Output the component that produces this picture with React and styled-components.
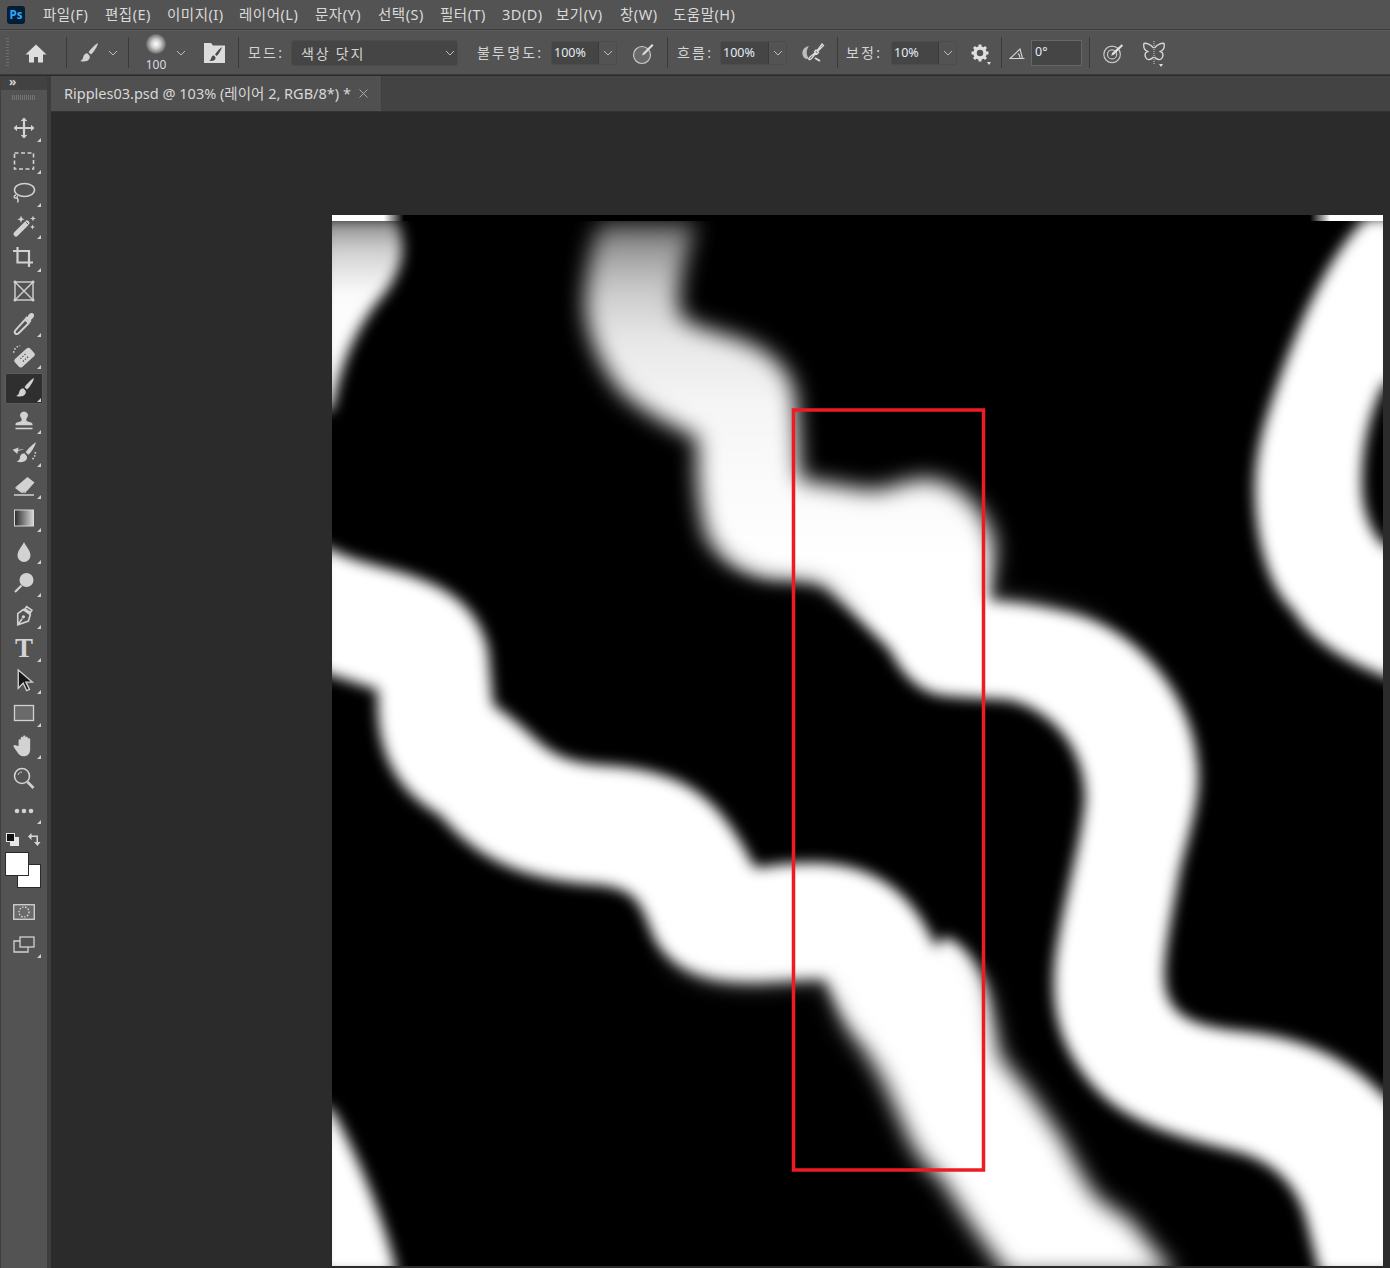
import React from 'react';
import styled, { createGlobalStyle } from 'styled-components';

const Global = createGlobalStyle`
  html, body { margin: 0; padding: 0; background: #2b2b2b; overflow: hidden; }
  #root { width: 1390px; height: 1268px; }
`;
const KR = `"Noto Sans", "Noto Sans CJK KR", sans-serif`;
const Page = styled.div`
  width: 1390px; height: 1268px; display: flex; flex-direction: column; overflow: hidden;
  font-family: ${KR}; color: #d6d6d6; background: #2b2b2b;
`;
const MenuBar = styled.div`
  height: 29px; flex: none; background: #535353; display: flex; align-items: center; padding-left: 7px;
  border-bottom: 1px solid #3c3c3c;
`;
const Logo = styled.div`
  width: 18px; height: 18px; border-radius: 3px; background: #001e36; color: #31a8ff; flex: none;
  font: 700 11.5px/18px "Open Sans", sans-serif; text-align: center; margin-right: 18px;
`;
const MenuItem = styled.span`
  font-size: 14.5px; line-height: 29px; color: #dadada; margin-right: 16px; white-space: nowrap;
  letter-spacing: 0.5px; width: ${p => p.$w}px;
`;
const OptionsBar = styled.div`
  height: 45px; flex: none; background: #535353; display: flex; align-items: center;
  border-top: 1px solid #5c5c5c; border-bottom: 1px solid #3a3a3a; box-sizing: border-box; margin-bottom: 1px;
`;
const Grip = styled.div`
  width: 3px; height: 30px; margin-left: 6px; flex: none;
  background: repeating-linear-gradient(to bottom, #6e6e6e 0 1px, transparent 1px 3px);
`;
const Sep = styled.div`
  width: 1px; height: 31px; background: #3a3a3a; flex: none; margin-left: ${p => p.$ml}px;
`;
const Slot = styled.div`
  width: ${p => p.$w}px; height: 30px; margin-left: ${p => p.$ml}px; flex: none; position: relative;
  display: flex; align-items: center; justify-content: center;
`;
const Label = styled.span`
  width: ${p => p.$w}px; margin-left: ${p => p.$ml}px; flex: none; font-size: 14px; color: #d4d4d4;
  white-space: nowrap; letter-spacing: 2.2px; margin-top: -2px;
`;
const Select = styled.div`
  width: ${p => p.$w}px; height: 26px; margin-left: ${p => p.$ml}px; flex: none; box-sizing: border-box;
  background: #454545; border: 1px solid #4c4c4c; border-radius: 3px; display: flex; align-items: center;
  justify-content: space-between; padding: 0 2px 0 9px; font-size: 14px; letter-spacing: 1.8px; color: #d4d4d4;
`;
const Combo = styled.div`
  width: ${p => p.$w}px; height: 24px; margin-left: ${p => p.$ml}px; flex: none; box-sizing: border-box; display: flex;
  border-radius: 3px; border: 1px solid #4c4c4c;
`;
const ComboValue = styled.div`
  flex: 1; background: #454545; font: 12.5px/22px "Noto Sans", sans-serif; color: #e4ecf4; padding-left: 2px;
`;
const ComboArrow = styled.div`
  width: 17px; border-left: 1px solid #3b3b3b; display: flex; align-items: center; justify-content: center;
`;
const AngleInput = styled.div`
  width: ${p => p.$w}px; height: 26px; margin-left: ${p => p.$ml}px; flex: none; box-sizing: border-box;
  background: #454545; border: 1px solid #666; font: 12.5px/22px "Noto Sans", sans-serif; color: #e4ecf4; padding-left: 3px;
`;
const PresetSize = styled.span`
  position: absolute; left: 0; right: 0; top: 20px; text-align: center; font: 12px/14px "Noto Sans", sans-serif; color: #d6dde4;
`;
const Dot = styled.span`
  position: absolute; right: ${p => p.$r || 0}px; bottom: ${p => p.$b || 0}px; width: 0; height: 0;
  border-left: 2.5px solid transparent; border-right: 2.5px solid transparent; border-top: 3px solid #e0e0e0;
`;
const Body = styled.div`
  flex: 1; display: flex; min-height: 0;
`;
const ToolPanel = styled.aside`
  width: 51px; flex: none; box-sizing: border-box; background: #535353; position: relative;
  border-left: 1px solid #3f3f3f; border-right: 4px solid #3d3d3d; display: flex; flex-direction: column;
`;
const Collapse = styled.div`
  height: 14px; flex: none; background: #424242; color: #d0d0d0; font: 700 12px/11px "Noto Sans", sans-serif;
  padding-left: 8px;
`;
const PanelGrip = styled.div`
  height: 22px; flex: none; display: flex; justify-content: center; padding-top: 5px; box-sizing: border-box;
`;
const PanelGripMark = styled.div`
  width: 24px; height: 5px; background: repeating-linear-gradient(to right, #747474 0 1px, transparent 1px 2px);
`;
const Tool = styled.div`
  height: 32.5px; flex: none; display: flex; align-items: center; justify-content: center; position: relative;
  &::before {
    content: ''; position: absolute; left: 4px; right: 4px; top: 1px; bottom: 1px; border-radius: 2px;
    background: ${p => p.$active ? '#2f2f2f' : 'transparent'};
    border: 1px solid ${p => p.$active ? '#5c5c5c' : 'transparent'};
  }
  & > * { position: relative; }
`;
const Corner = styled.span`
  position: absolute !important; right: 6px; bottom: 3px; width: 0; height: 0;
  border-left: 4px solid transparent; border-bottom: 4px solid #d0d0d0;
`;
const TGlyph = styled.span`
  font: 700 27px/24px "Liberation Serif", serif; color: #d4d4d4;
`;
const SwapRow = styled.div`
  display: flex; justify-content: space-between; align-items: center; margin: 5px 6px 0 5px; height: 14px; flex: none;
`;
const ColorStack = styled.div`
  width: 36px; height: 36px; margin: 6px 0 0 4px; position: relative; flex: none;
`;
const Swatch = styled.div`
  position: absolute; width: 24px; height: 24px; box-sizing: border-box; background: #fff; border: 1px solid #2b2b2b;
  left: ${p => p.$x}px; top: ${p => p.$y}px;
`;
const BottomTool = styled.div`
  height: 33px; flex: none; display: flex; align-items: center; justify-content: center; position: relative;
  margin-top: ${p => p.$mt || 0}px;
`;
const Main = styled.main`
  flex: 1; display: flex; flex-direction: column; min-width: 0;
`;
const TabBar = styled.div`
  height: 36px; flex: none; background: #434343; display: flex; box-sizing: border-box; border-bottom: 1px solid #333;
`;
const Tab = styled.div`
  width: 331px; box-sizing: border-box; background: #505050; display: flex; align-items: center; padding: 0 0 3px 13px;
  font-size: 14.5px; color: #d8d8d8; white-space: nowrap; gap: 8px; border-right: 1px solid #3f3f3f;
`;
const TabClose = styled.svg`
  margin-top: 3px; flex: none;
`;
const Stage = styled.div`
  flex: 1; background: #2b2b2b; padding: 103px 0 0 281px; min-height: 0;
`;

const S = { fill: 'none', stroke: '#d2d2d2', strokeWidth: 1.4 };
const F = '#d2d2d2';
const Ico = ({ children, w = 24, h = 24, s }) => (
  <svg width={s || w} height={s || h} viewBox={`0 0 ${w} ${h}`}>{children}</svg>
);
const brush = (
  <>
    <path d="M22 2c-2 1-7 5.500-9.500 9.200l2.500 2.400C18.300 10.500 21.500 5 22 2z" fill={F} />
    <path d="M11.300 12.300c-3 .3-3.800 2.200-4.100 4-.2 1.600-1.100 2.700-3 3.600 3.400 1.200 7.500.7 9.100-1.900.8-1.400.6-2.700-.1-3.700z" fill={F} />
  </>
);
const TOOLS = [
  { c: <path d="M12 1.500l3.300 3.500h-2.200v5.900h5.900V8.700l3.500 3.300-3.500 3.300v-2.200h-5.900V19h2.200L12 22.500 8.700 19h2.200v-5.900H5V15.300L1.500 12 5 8.700v2.200h5.900V5H8.700z" fill={F} />, m: 1 },
  { c: <rect x="2.500" y="4" width="19" height="16" {...S} strokeDasharray="4 2.500" strokeWidth="1.600" />, m: 1 },
  { c: <><ellipse cx="12.500" cy="9" rx="10" ry="6.500" {...S} strokeWidth="1.500" /><path d="M4 14c-2 .5-2.500 2.500-1 3 1.500.5 3-.5 2-2M5 17c1 1 2 2 .5 4.500" {...S} /></>, m: 1 },
  { c: <><path d="M4 20L15 9" stroke={F} strokeWidth="5" strokeLinecap="round" /><path d="M13.500 7.500l3 3" stroke="#535353" strokeWidth="0.900" /><path d="M9 1.500l1 2.700 2.700 1-2.700 1-1 2.700-1-2.700-2.700-1 2.700-1zM21 1.500l.8 2.200 2.200.8-2.200.8-.8 2.200-.8-2.200-2.200-.8 2.200-.8zM20.500 10.500l.7 1.800 1.800.7-1.800.7-.7 1.800-.7-1.800-1.800-.7 1.800-.7z" fill={F} /></>, m: 1 },
  { c: <path d="M2 6h4.500M6.500 2v15.500H22M6.500 6H18v16" {...S} strokeWidth="2.200" transform="translate(-1 -1)" />, m: 1 },
  { c: <><rect x="3" y="3" width="18" height="18" {...S} /><path d="M3 3l18 18M21 3L3 21" {...S} /><path d="M3 1.500v3M1.500 3h3M21 1.500v3M19.500 3h3M3 19.500v3M1.500 21h3M21 19.500v3M19.500 21h3" {...S} /></> },
  { c: <><path d="M15.500 4.500c1.500-1.800 3.500-2.200 4.500-1.200s.6 3-1.200 4.500l-1.300 1.200.8.800-1.800 1.800-4.300-4.300 1.800-1.800.8.800z" fill={F} /><path d="M12.500 8.500l3.200 3.200-8.700 8.700c-1 1-2.300 1.300-3.200.5-.8-.9-.5-2.200.5-3.200z" {...S} strokeWidth="1.700" /></>, m: 1, s: 27 },
  { c: <><g transform="rotate(-42 12.500 13.500)"><rect x="3" y="8.500" width="19" height="10" rx="2.500" fill={F} /><path d="M9 11h1.200v1.200H9zM11.600 11h1.200v1.200h-1.200zM14.200 11h1.200v1.200h-1.200zM9 14.500h1.200v1.200H9zM11.600 14.500h1.200v1.200h-1.200zM14.200 14.500h1.200v1.200h-1.200z" fill="#535353" /></g><path d="M2.500 9c0-3 2.500-6 6-6.500" {...S} strokeDasharray="1.500 1.500" /></>, m: 1, s: 26 },
  { c: brush, m: 1, active: true },
  { c: <><path d="M12 2.500a4 4 0 0 1 2.700 7c-.6.600-.6 2 .3 2.700 1.300.9 5.500.6 5.500 3.100v1H3.500v-1c0-2.500 4.200-2.200 5.500-3.100.9-.7.900-2.100.3-2.700A4 4 0 0 1 12 2.500z" fill={F} /><path d="M3.500 19.500h17" {...S} strokeWidth="1.600" /></>, m: 1 },
  { c: <><g transform="translate(1 0)">{brush}</g><path d="M1.500 9l5.500-2-.5 2.500c2.200-1.200 4-1.200 5.500-.6-2.300-.1-4 .5-5.800 1.800l-.4 2.300z" fill={F} /><path d="M22.500 11c0 3-1 5.500-3.500 7.500" {...S} strokeDasharray="1.500 1.500" /></>, m: 1, s: 26 },
  { c: <><path d="M15.500 3l7 5.500-8 9H9L3.700 13z" fill={F} /><path d="M3.500 13.500l6 4.500H14M2 21h20" {...S} /></>, m: 1 },
  { c: <><defs><linearGradient id="gr1" x1="0" x2="1" y1="0" y2="0"><stop offset="0" stopColor="#2b2b2b" /><stop offset="1" stopColor="#d8d8d8" /></linearGradient></defs><rect x="2.500" y="4" width="19" height="16" fill="url(#gr1)" stroke="#d8d8d8" strokeWidth="1" /></>, m: 1 },
  { c: <path d="M12 2c-1 3.500-6.500 8-6.500 13.500a6.500 6.500 0 0 0 13 0C18.500 10 13 5.500 12 2z" fill={F} transform="translate(0 1)" />, m: 1 },
  { c: <><circle cx="14.500" cy="9" r="7" fill={F} /><path d="M9.500 14.500L3 21" {...S} strokeWidth="2.200" /></>, m: 1 },
  { c: <g transform="rotate(35 12 12)"><path d="M8 7.500h8l2 6-6 8.500-6-8.500zM9 3.500h6v2.500H9zM12 22v-7" {...S} strokeWidth="1.500" /><circle cx="12" cy="13" r="1.500" fill={F} /></g>, m: 1, s: 26 },
  { c: <TGlyph>T</TGlyph>, m: 1 },
  { c: <path d="M6 2l13.500 11.500h-6.200l3.500 7-2.700 1.300-3.300-7.300L6 19.500z" fill="#161616" stroke={F} strokeWidth="1.300" />, m: 1, s: 25 },
  { c: <rect x="2.500" y="4.500" width="19" height="15" fill="#6a6a6a" stroke="#d2d2d2" strokeWidth="1.300" />, m: 1 },
  { c: <path d="M7 12V7c0-1.500 2-1.500 2 0V4.500c0-1.500 2.200-1.500 2.200 0V3.500c0-1.500 2.200-1.500 2.200 0v1c0-1.400 2.200-1.400 2.200 0V6c0-1.400 2.100-1.400 2.100 0v9c0 4-2.500 6.500-6 6.500-3.200 0-4.500-1.700-6-4L2.500 13c-.8-1.500.8-2.500 2-1.500z" fill={F} />, m: 1, s: 26 },
  { c: <><circle cx="10" cy="10" r="7.500" {...S} strokeWidth="1.600" /><path d="M15.500 16l6 6" {...S} strokeWidth="2.600" /><path d="M6 9c.5-2 2-3 4-3" {...S} strokeWidth="1" /></> },
  { c: <><circle cx="5" cy="12" r="2.300" fill={F} /><circle cx="12" cy="12" r="2.300" fill={F} /><circle cx="19" cy="12" r="2.300" fill={F} /></>, m: 1 },
];
const chev = (
  <svg width="10" height="6" viewBox="0 0 10 6"><path d="M1 1l4 4 4-4" fill="none" stroke="#bdbdbd" strokeWidth="1" /></svg>
);
const MENUS = [
  ['파일(F)', 46], ['편집(E)', 46], ['이미지(I)', 56], ['레이어(L)', 60], ['문자(Y)', 47], ['선택(S)', 46], ['필터(T)', 46], ['3D(D)', 38], ['보기(V)', 48], ['창(W)', 37], ['도움말(H)', 64],
];

// Canvas artwork, in page coordinates
const SHAPE_A = "M600 222 C590 250 585 280 585 310 C590 340 600 365 620 390 C640 410 670 425 698 438 C696 470 698 500 705 530 C715 560 745 578 780 580 C800 580 815 582 825 587 C840 600 870 630 890 650 C900 670 915 690 940 695 C960 698 985 698 1010 700 C1050 710 1085 745 1085 800 C1080 850 1063 900 1055 960 C1050 1010 1060 1050 1097 1090 C1130 1125 1190 1140 1230 1150 C1275 1160 1295 1185 1305 1215 L1320 1275 L1395 1275 L1395 1105 L1383 1095 C1340 1050 1290 1035 1230 1030 C1200 1025 1170 1020 1165 985 C1162 960 1172 915 1180 870 C1190 830 1200 800 1198 770 C1195 700 1140 625 1060 610 C1040 605 1010 600 990 600 C992 580 996 560 993 540 C985 510 960 485 935 480 C910 475 890 492 870 490 C850 488 825 482 800 480 C798 450 798 420 794 390 C785 360 760 345 730 336 C710 330 690 325 680 315 C675 290 685 260 697 222 Z";
const SHAPE_B = "M320 545 L332 550 C380 575 470 570 488 650 L493 705 C540 735 540 760 600 765 C690 770 720 800 755 868 C830 855 900 860 936 948 L943 937 C965 940 985 975 990 1000 L1000 1057 C1010 1070 1020 1080 1030 1093 L1063 1140 C1075 1165 1085 1180 1093 1193 C1110 1210 1120 1212 1130 1220 L1175 1275 L1008 1275 L973 1227 L940 1177 C925 1165 918 1155 910 1140 L883 1080 L863 1047 C845 1030 835 1005 825 980 C770 980 690 1000 655 940 C640 905 640 890 600 885 C510 880 470 850 440 815 C395 790 375 750 378 690 L332 675 L320 672 Z";
const SHAPE_C = "M1366 218 C1335 250 1310 295 1280 377 C1265 420 1255 450 1255 490 C1255 540 1270 590 1293 610 C1310 640 1345 662 1395 680 L1395 548 L1383 545 C1370 530 1362 510 1362 483 C1362 440 1372 410 1383 385 L1395 380 L1395 218 Z";
const SHAPE_D = "M320 218 L395 218 C412 250 398 280 375 305 C350 340 340 370 332 410 L320 410 Z";
const SHAPE_E = "M320 1105 L332 1110 C355 1150 385 1220 397 1275 L320 1275 Z";

const crossfade = (id, y1, y2, invert) => (
  <>
    <linearGradient id={`${id}G`} gradientUnits="userSpaceOnUse" x1="0" y1={y1} x2="0" y2={y2}>
      <stop offset="0" stopColor={invert ? '#000' : '#fff'} />
      <stop offset="1" stopColor={invert ? '#fff' : '#000'} />
    </linearGradient>
    <mask id={id} maskUnits="userSpaceOnUse" x="280" y="180" width="1160" height="1140">
      <rect x="280" y="180" width="1160" height="1140" fill={`url(#${id}G)`} />
    </mask>
  </>
);

const Canvas = () => (
  <svg width="1051" height="1051" viewBox="332 215 1051 1051" style={{ display: 'block' }}>
    <defs>
      <filter id="soft" filterUnits="userSpaceOnUse" x="280" y="180" width="1160" height="1140"><feGaussianBlur stdDeviation="7" /></filter>
      <filter id="softer" filterUnits="userSpaceOnUse" x="280" y="180" width="1160" height="1140"><feGaussianBlur stdDeviation="11" /></filter>
      <linearGradient id="fadeA" gradientUnits="userSpaceOnUse" x1="0" y1="222" x2="0" y2="560">
        <stop offset="0" stopColor="#5a5a5a" />
        <stop offset="0.08" stopColor="#9a9a9a" />
        <stop offset="0.2" stopColor="#cacaca" />
        <stop offset="0.35" stopColor="#e8e8e8" />
        <stop offset="0.55" stopColor="#f6f6f6" />
        <stop offset="1" stopColor="#ffffff" />
      </linearGradient>
      <linearGradient id="fadeD" gradientUnits="userSpaceOnUse" x1="0" y1="220" x2="0" y2="295">
        <stop offset="0" stopColor="#858585" />
        <stop offset="0.4" stopColor="#d0d0d0" />
        <stop offset="1" stopColor="#fcfcfc" />
      </linearGradient>
      <linearGradient id="stripL" x1="0" x2="1" y1="0" y2="0">
        <stop offset="0.72" stopColor="#fff" />
        <stop offset="1" stopColor="#fff" stopOpacity="0" />
      </linearGradient>
      <linearGradient id="stripR" x1="0" x2="1" y1="0" y2="0">
        <stop offset="0" stopColor="#fff" stopOpacity="0" />
        <stop offset="0.28" stopColor="#fff" />
      </linearGradient>
      {crossfade('bUp', 950, 1060, false)}
      {crossfade('bDown', 950, 1060, true)}
      {crossfade('aUp', 540, 620, false)}
      {crossfade('aDown', 540, 620, true)}
      <clipPath id="below"><rect x="332" y="221" width="1051" height="1045" /></clipPath>
    </defs>
    <rect x="332" y="215" width="1051" height="1051" fill="#000" />
    <g clipPath="url(#below)" style={{ isolation: 'isolate' }}>
      <g filter="url(#soft)">
        <path d={SHAPE_C} fill="#fff" />
        <path d={SHAPE_D} fill="url(#fadeD)" />
        <path d={SHAPE_E} fill="#fff" />
      </g>
      <g mask="url(#aUp)" style={{ mixBlendMode: 'lighten' }}><path d={SHAPE_A} fill="url(#fadeA)" filter="url(#softer)" /></g>
      <g mask="url(#aDown)" style={{ mixBlendMode: 'plus-lighter' }}><path d={SHAPE_A} fill="url(#fadeA)" filter="url(#soft)" /></g>
      <g mask="url(#bUp)" style={{ mixBlendMode: 'plus-lighter' }}><path d={SHAPE_B} fill="#fff" filter="url(#soft)" /></g>
      <g mask="url(#bDown)" style={{ mixBlendMode: 'plus-lighter' }}><path d={SHAPE_B} fill="#fff" filter="url(#softer)" /></g>
    </g>
    <rect x="332" y="215" width="72" height="6" fill="url(#stripL)" />
    <rect x="1310" y="215" width="73" height="6" fill="url(#stripR)" />
    <rect x="793.500" y="410" width="190" height="760" fill="none" stroke="#ed1c24" strokeWidth="3.500" />
  </svg>
);

export default function App() {
  return (
    <Page>
      <Global />
      <MenuBar>
        <Logo>Ps</Logo>
        {MENUS.map(([t, w]) => <MenuItem key={t} $w={w}>{t}</MenuItem>)}
      </MenuBar>
      <OptionsBar>
        <Grip />
        <Slot $ml={13} $w={28}><Ico><path d="M12 3.500L1.500 13.500h3.500v8h5v-5.500h4v5.500h5v-8h3.500z" fill="#dedede" /></Ico></Slot>
        <Sep $ml={16} />
        <Slot $ml={9} $w={24}><Ico>{brush}</Ico></Slot>
        <Slot $ml={8} $w={10}>{chev}</Slot>
        <Sep $ml={10} />
        <Slot $ml={14} $w={26}>
          <svg width="20" height="20" viewBox="0 0 20 20" style={{ marginTop: -17 }}>
            <defs><radialGradient id="pre"><stop offset="0" stopColor="#fff" /><stop offset="0.45" stopColor="#cfcfcf" /><stop offset="1" stopColor="#686868" /></radialGradient></defs>
            <circle cx="10" cy="10" r="10" fill="url(#pre)" />
          </svg>
          <PresetSize>100</PresetSize>
        </Slot>
        <Slot $ml={7} $w={10}>{chev}</Slot>
        <Slot $ml={17} $w={23}>
          <Ico w={23} h={23}><path d="M1 2h7l2 2.500h12V22H1z" fill="#dcdcdc" /><path d="M19 6c-2 1-5 4.500-7 7.500l1.700 1.500C16 12.500 18.500 8.500 19 6z" fill="#4a4a4a" /><path d="M11 14.500c-2 .2-2.500 1.500-2.800 2.800-.1 1-.8 1.700-2 2.200 2.300.8 5 .4 6-1.300.5-.9.300-1.800-.1-2.500z" fill="#4a4a4a" /></Ico>
        </Slot>
        <Sep $ml={12} />
        <Label $ml={9} $w={38}>모드:</Label>
        <Select $ml={5} $w={167}><span>색상 닷지</span>{chev}</Select>
        <Label $ml={19} $w={66}>불투명도:</Label>
        <Combo $ml={8} $w={66}><ComboValue>100%</ComboValue><ComboArrow>{chev}</ComboArrow></Combo>
        <Slot $ml={14} $w={24}>
          <Ico><circle cx="11" cy="14" r="8.500" fill="#6a6a6a" stroke="#c8c8c8" strokeWidth="1.200" /><path d="M21 3l1.500 1.500-9 9-2.500 1 1-2.500z" fill="#dedede" /></Ico>
        </Slot>
        <Sep $ml={12} />
        <Label $ml={9} $w={36}>흐름:</Label>
        <Combo $ml={7} $w={67}><ComboValue>100%</ComboValue><ComboArrow>{chev}</ComboArrow></Combo>
        <Slot $ml={14} $w={24}>
          <Ico><path d="M8 5c-5 1-8 5-6 10 1 2.500 3.500 3.500 6 2.500-2.500-3-3.500-8 0-12.500z" fill="#bdbdbd" /><path d="M21 3l1.500 1.500-6 6 1 1-1.500 1.500-1-1-4 5c-1 1-2.500 2-3 1.500s.3-2 1.500-3l5-4-1-1 1.500-1.500 1 1z" fill="none" stroke="#dedede" strokeWidth="1.300" /><path d="M14 17l5 3" stroke="#dedede" strokeWidth="2" /></Ico>
        </Slot>
        <Sep $ml={12} />
        <Label $ml={8} $w={37}>보정:</Label>
        <Combo $ml={8} $w={66}><ComboValue>10%</ComboValue><ComboArrow>{chev}</ComboArrow></Combo>
        <Slot $ml={12} $w={22}>
          <Ico w={20} h={20}><circle cx="10" cy="10" r="5" fill="none" stroke="#e0e0e0" strokeWidth="3.500" /><path d="M10 1.500v4M10 14.500v4M1.500 10h4M14.500 10h4M4 4l2.800 2.800M13.200 13.200L16 16M16 4l-2.800 2.800M6.800 13.200L4 16" stroke="#e0e0e0" strokeWidth="3" /></Ico>
          <Dot $r={0} $b={3} />
        </Slot>
        <Sep $ml={10} />
        <Slot $ml={6} $w={18}><Ico w={16} h={14}><path d="M15.500 12.500H1L11 3l2.500 9.500M9 7.500c1.500 1 2 3 2 5" fill="none" stroke="#d6d6d6" strokeWidth="1.100" /></Ico></Slot>
        <AngleInput $ml={5} $w={51}>0°</AngleInput>
        <Sep $ml={7} />
        <Slot $ml={12} $w={22}>
          <Ico><circle cx="11" cy="13.500" r="9" fill="none" stroke="#c8c8c8" strokeWidth="1.300" /><circle cx="11" cy="13.500" r="5" fill="none" stroke="#c8c8c8" strokeWidth="1.300" /><path d="M21.500 2.500l1.500 1.500-10 10-3 1 1-3z" fill="#e0e0e0" /></Ico>
        </Slot>
        <Slot $ml={18} $w={24}>
          <Ico><path d="M11.500 7C9 3.500 4 1.500 2 2.500c-.8 3.500.5 6.500 3.500 8-2.800 1-3 4-1.500 6.500 1.500 2.500 5 2 7.500-1M12.500 7c2.500-3.500 7.500-5.500 9.500-4.500.8 3.500-.5 6.500-3.500 8 2.800 1 3 4 1.500 6.500-1.500 2.500-5 2-7.500-1" fill="none" stroke="#d6d6d6" strokeWidth="1.400" /><path d="M12 0v24" stroke="#d6d6d6" strokeWidth="1" strokeDasharray="1 1" /></Ico>
          <Dot $r={3} $b={1} />
        </Slot>
      </OptionsBar>
      <Body>
        <ToolPanel>
          <Collapse>»</Collapse>
          <PanelGrip><PanelGripMark /></PanelGrip>
          {TOOLS.map((t, i) => (
            <Tool key={i} $active={t.active}>
              {t.c.type === TGlyph ? t.c : <Ico s={t.s}>{t.c}</Ico>}
              {t.m && <Corner />}
            </Tool>
          ))}
          <SwapRow>
            <svg width="13" height="13" viewBox="0 0 13 13"><rect x="4" y="4" width="9" height="9" fill="#e6e6e6" /><rect x="0.500" y="0.500" width="8" height="8" fill="#111" stroke="#e6e6e6" /></svg>
            <svg width="13" height="13" viewBox="0 0 13 13"><path d="M0 3.500L3.500 0v2.500h6.500V9h2.500L9.500 13 6 9h2.500V4H3.500v3z" fill="#d6d6d6" /></svg>
          </SwapRow>
          <ColorStack>
            <Swatch $x={12} $y={12} />
            <Swatch $x={0} $y={0} />
          </ColorStack>
          <BottomTool $mt={7}>
            <svg width="22" height="16" viewBox="0 0 22 16"><rect x="0.700" y="0.700" width="20.600" height="14.600" fill="#6a6a6a" stroke="#d2d2d2" strokeWidth="1.300" /><circle cx="11" cy="8" r="5" fill="none" stroke="#e6e6e6" strokeWidth="1.200" strokeDasharray="1.500 1.500" /></svg>
          </BottomTool>
          <BottomTool>
            <svg width="22" height="17" viewBox="0 0 22 17"><rect x="7" y="1" width="14" height="10" fill="none" stroke="#d2d2d2" strokeWidth="1.300" /><path d="M7 5H1v11h14v-5" fill="none" stroke="#d2d2d2" strokeWidth="1.300" /></svg>
            <Corner />
          </BottomTool>
        </ToolPanel>
        <Main>
          <TabBar>
            <Tab>
              <span>Ripples03.psd @ 103% (레이어 2, RGB/8*) *</span>
              <TabClose width="9" height="9" viewBox="0 0 9 9"><path d="M.5.5l8 8M8.500.5l-8 8" stroke="#a8a8a8" strokeWidth="1" /></TabClose>
            </Tab>
          </TabBar>
          <Stage><Canvas /></Stage>
        </Main>
      </Body>
    </Page>
  );
}
